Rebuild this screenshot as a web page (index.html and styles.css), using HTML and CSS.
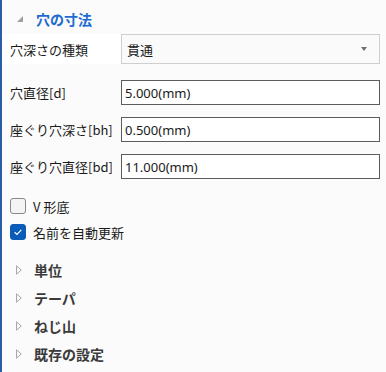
FILE: index.html
```html
<!DOCTYPE html>
<html lang="ja">
  <head>
    <meta charset="UTF-8" />
    <meta name="viewport" content="width=device-width, initial-scale=1.0" />
    <title>穴の寸法</title>
    <link rel="stylesheet" href="styles.css">
  </head>
  <body>
    <div class="panel">
      <div class="group_header">
        <svg class="caret_open" viewBox="0 0 8 8"><path d="M7 1L7 7L1 7z" /></svg>
        <span>穴の寸法</span>
      </div>

      <div class="fields">
        <div class="field field_select">
          <label>穴深さの種類</label>
          <div class="select">
            <span>貫通</span>
            <svg class="select_arrow" viewBox="0 0 6 4"><path d="M0 0h6L3 4z" /></svg>
          </div>
        </div>
        <div class="field">
          <label>穴直径[d]</label>
          <div class="input">5.000(mm)</div>
        </div>
        <div class="field">
          <label>座ぐり穴深さ[bh]</label>
          <div class="input">0.500(mm)</div>
        </div>
        <div class="field">
          <label>座ぐり穴直径[bd]</label>
          <div class="input">11.000(mm)</div>
        </div>
      </div>

      <div class="checks">
        <div class="check">
          <span class="box"></span>
          <span>V 形底</span>
        </div>
        <div class="check">
          <span class="box checked">
            <svg viewBox="0 0 16 16"><path d="M4.2 8.3l2.6 2.5 5-5.2" /></svg>
          </span>
          <span>名前を自動更新</span>
        </div>
      </div>

      <ul class="sections">
        <li><svg class="caret" viewBox="0 0 6 10"><path d="M0.5 0.8L5.3 5L0.5 9.2z" /></svg>単位</li>
        <li><svg class="caret" viewBox="0 0 6 10"><path d="M0.5 0.8L5.3 5L0.5 9.2z" /></svg>テーパ</li>
        <li><svg class="caret" viewBox="0 0 6 10"><path d="M0.5 0.8L5.3 5L0.5 9.2z" /></svg>ねじ山</li>
        <li><svg class="caret" viewBox="0 0 6 10"><path d="M0.5 0.8L5.3 5L0.5 9.2z" /></svg>既存の設定</li>
      </ul>
    </div>
  </body>
</html>
```

FILE: styles.css
```css
* {
  box-sizing: border-box;
  padding: 0;
  margin: 0;
}
body {
  background: #fbfbfb;
  font-family: "Noto Sans CJK JP", sans-serif;
  font-size: 13px;
  color: #1a1a1a;
}
.panel {
  height: 372px;
  border-left: 2px solid #2b5ca6;
}
.group_header {
  height: 34px;
  display: flex;
  align-items: center;
  padding: 4px 0 0 14px;
  gap: 12px;
  color: #1c6bd0;
  font-size: 14px;
  font-weight: 700;
}
.caret_open {
  width: 8px;
  height: 8px;
  fill: #a0a0a0;
}
.fields {
  display: flex;
  flex-direction: column;
  gap: 12px;
  padding-right: 6px;
}
.field {
  display: flex;
  align-items: center;
  height: 25px;
}
.field_select {
  height: 30px;
  margin-bottom: 4px;
  background: #fff;
}
.field label {
  width: 119px;
  padding-left: 8px;
  flex-shrink: 0;
}
.select,
.input {
  flex: 1;
  height: 100%;
  display: flex;
  align-items: center;
}
.select {
  border: 1px solid #cfcfcf;
  background: #fafafa;
  padding: 0 12px 0 5px;
  justify-content: space-between;
}
.select_arrow {
  width: 6px;
  height: 4px;
  fill: #707070;
}
.input {
  border: 1px solid #5c5c5c;
  background: #fff;
  padding-left: 3px;
  font-family: "Noto Sans", "Noto Sans CJK JP", sans-serif;
}
.checks {
  display: flex;
  flex-direction: column;
  gap: 10px;
  padding: 19px 0 0 8px;
}
.check {
  display: flex;
  align-items: center;
  gap: 7px;
  height: 16px;
}
.box {
  width: 16px;
  height: 16px;
  border: 1px solid #888;
  border-radius: 3px;
  background: #f4f4f4;
}
.box.checked {
  border-color: #0b5cb8;
  background: #0b5cb8;
}
.box svg {
  display: block;
  width: 14px;
  height: 14px;
  fill: none;
  stroke: #fff;
  stroke-width: 1.4;
}
.sections {
  list-style: none;
  padding-top: 16px;
}
.sections li {
  display: flex;
  align-items: center;
  height: 28px;
  padding-left: 14px;
  gap: 12px;
  font-size: 14px;
  font-weight: 700;
  color: #3a3a3a;
}
.caret {
  width: 6px;
  height: 10px;
  fill: none;
  stroke: #a8a8a8;
  stroke-width: 1;
}
```
